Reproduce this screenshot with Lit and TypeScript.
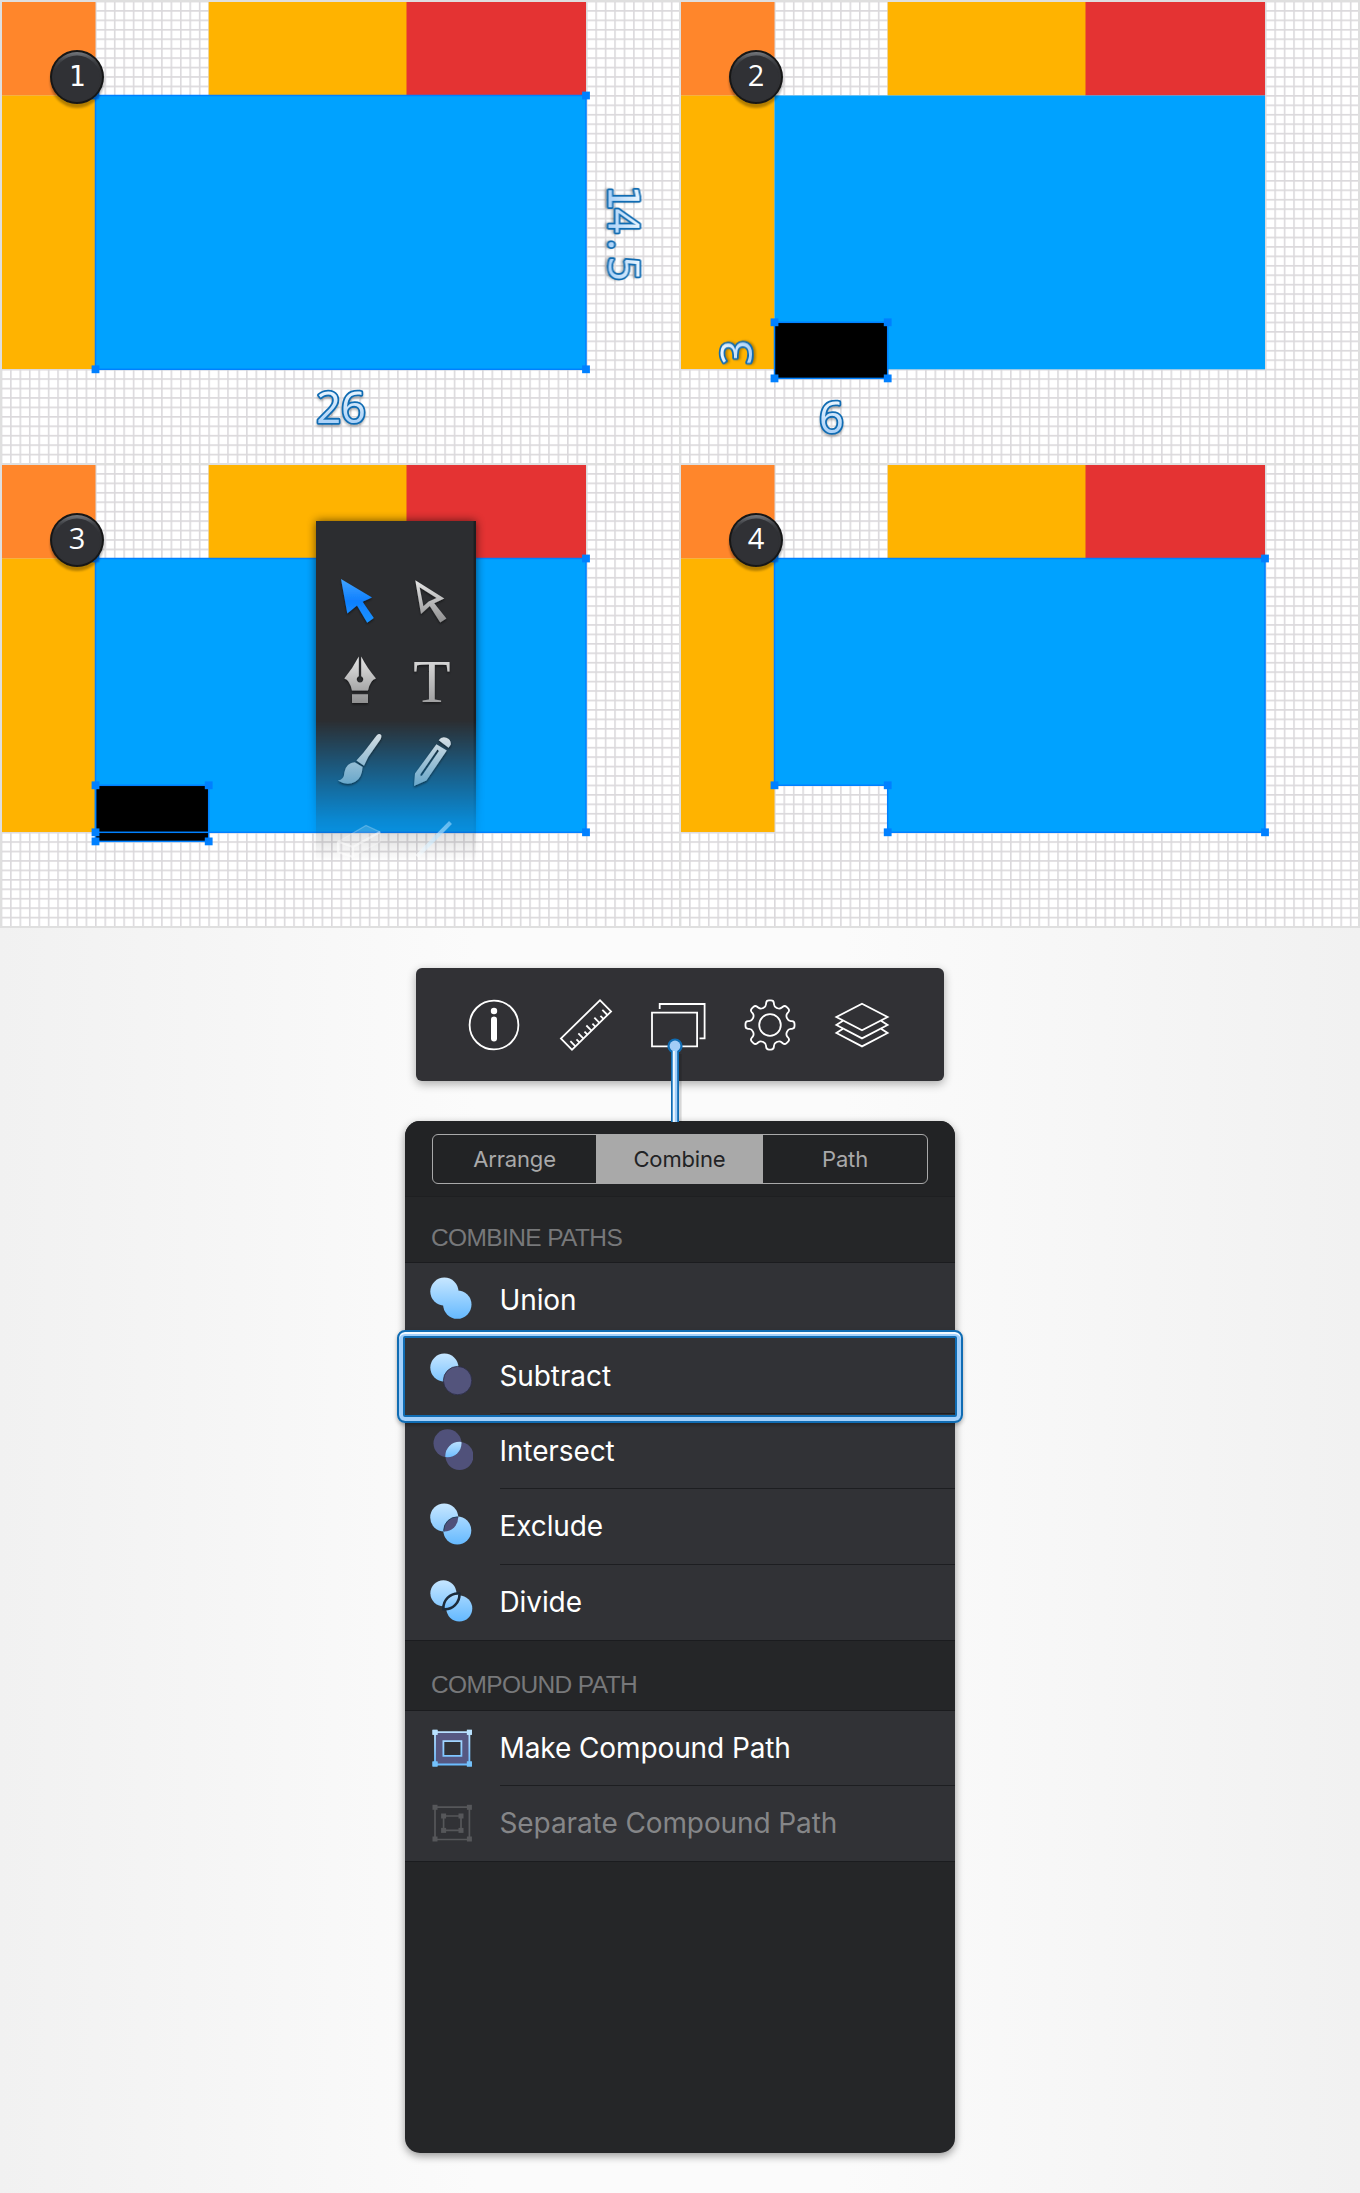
import { LitElement, html, svg, css } from 'lit';
import { customElement, property } from 'lit/decorators.js';

type Point = [number, number];

const X0 = 95.5;
const X1 = 208.7;
const X2 = 586;
const Y0 = 95.5;
const YN = 322.3;
const Y1 = 369.3;
const YB = 378.4;

const polar = (r: number, deg: number): Point => [
  r * Math.cos((deg * Math.PI) / 180),
  r * Math.sin((deg * Math.PI) / 180),
];

/** Closed path through the points with every corner rounded by d. */
function roundedPath(points: Point[], d: number): string {
  const n = points.length;
  const toward = (a: Point, b: Point): Point => {
    const len = Math.hypot(b[0] - a[0], b[1] - a[1]);
    const k = Math.min(d, len / 2) / len;
    return [a[0] + (b[0] - a[0]) * k, a[1] + (b[1] - a[1]) * k];
  };
  return (
    points
      .map((p, i) => {
        const a = toward(p, points[(i + n - 1) % n]);
        const b = toward(p, points[(i + 1) % n]);
        return `${i ? 'L' : 'M'}${a[0]},${a[1]}Q${p[0]},${p[1]} ${b[0]},${b[1]}`;
      })
      .join('') + 'Z'
  );
}

const gearPath = roundedPath(
  Array.from({ length: 8 }, (_, i) => i * 45).flatMap((a) => [
    polar(18.6, a - 13),
    polar(24.8, a - 8.5),
    polar(24.8, a + 8.5),
    polar(18.6, a + 13),
  ]),
  2.6,
);

@customElement('grid-panel')
export class GridPanel extends LitElement {
  @property({ type: Number }) step = 1;

  static styles = css`
    :host {
      display: block;
      overflow: hidden;
    }
    svg {
      display: block;
    }
    .num {
      font-family: 'Open Sans', sans-serif;
      font-size: 29px;
      fill: #fff;
      text-anchor: middle;
    }
    .num.slab {
      font-size: 27.5px;
    }
    .dim {
      font-family: 'Open Sans', sans-serif;
      font-size: 43.5px;
      font-weight: 500;
      fill: url(#ice);
      stroke: #106cb3;
      stroke-width: 3.6px;
      stroke-linejoin: round;
      paint-order: stroke;
      text-anchor: middle;
      filter: drop-shadow(0 2px 1px rgba(0, 0, 0, 0.28));
    }
    .slab {
      font-family: 'DejaVu Sans Mono', monospace;
      font-weight: 400;
    }
    .tee {
      font-family: 'Liberation Serif', serif;
      font-size: 61px;
      text-anchor: middle;
    }
  `;

  private handles(points: Point[]) {
    return points.map(
      ([x, y]) => svg`<rect x=${x - 3.9} y=${y - 3.9} width="7.8" height="7.8" fill="#0080ff"/>`,
    );
  }

  private shape() {
    const box = svg`<rect x=${X0} y=${Y0} width=${X2 - X0} height=${Y1 - Y0} fill="#00a2ff"/>`;
    const boxLine = svg`<rect x=${X0} y=${Y0} width=${X2 - X0} height=${Y1 - Y0}
      fill="none" stroke="#0080ff" stroke-width="1.5"/>`;
    const notch = svg`<rect x=${X0} y=${YN} width=${X1 - X0} height=${YB - YN}
      fill="#000" stroke="#0080ff" stroke-width="1.5"/>`;
    const notchPts: Point[] = [[X0, YN], [X1, YN], [X0, YB], [X1, YB]];
    const boxPts: Point[] = [[X0, Y0], [X2, Y0], [X0, Y1], [X2, Y1]];
    switch (this.step) {
      case 1:
        return svg`${box}${boxLine}${this.handles(boxPts)}`;
      case 2:
        return svg`${box}${notch}${this.handles(notchPts)}`;
      case 3:
        return svg`${box}${notch}${boxLine}${this.handles([...boxPts, ...notchPts])}`;
      default:
        return svg`<path d="M${X0},${Y0}H${X2}V${Y1}H${X1}V${YN}H${X0}Z" fill="#00a2ff"
          stroke="#0080ff" stroke-width="1.5"/>
          ${this.handles([[X0, Y0], [X2, Y0], [X2, Y1], [X1, Y1], [X1, YN], [X0, YN]])}`;
    }
  }

  private labels() {
    if (this.step === 1) {
      return svg`
        <text class="dim" x="341" y="422.5">26</text>
        <g transform="translate(608.5 233) rotate(90)">
          <text class="dim" y="0"><tspan class="slab" x="-35.5" font-size="42">1</tspan><tspan x="-12">4</tspan><tspan x="11.8">.</tspan><tspan x="35.6">5</tspan></text>
        </g>`;
    }
    if (this.step === 2) {
      return svg`
        <text class="dim" x="152.5" y="432.5">6</text>
        <g transform="translate(73 352.3) rotate(-90)"><text class="dim">3</text></g>`;
    }
    return null;
  }

  private palette() {
    return svg`
      <g transform="translate(0 -463)">
        <g mask="url(#fade)">
          <rect x="316" y="521" width="160" height="345" fill="#000" opacity=".6" filter="url(#soft)"/>
          <rect x="316" y="521" width="160" height="345" fill="#2c2d30"/>
          <rect x="473.6" y="521" width="2.4" height="345" fill="#1d1e21"/>
        </g>
        <g filter="url(#drop)">
          <path d="M341,579L372,597.5L362.6,601.8L373.8,618L367.2,622.8L357,605.6L347.3,613.5Z" fill="url(#arrow)"/>
          <path fill="url(#metal)" fill-rule="evenodd"
            d="M415.3,580.3L444.3,598.6L434.2,603.2L446.4,618.4L440.2,622.6L429.8,606L421,613.9Z
               M419.6,587.2L436.6,598L428.6,601.4L423.4,606.3Z"/>
          <path fill="url(#metal)" fill-rule="evenodd"
            d="M358.8,656.5L358.8,676.2A3.3,3.3 0 1 0 361.2,676.2L361.2,656.5Q367,668 376,678.4Q370,680 368,690.6H352Q350,680 344.3,678.4Q353,668 358.8,656.5Z
               M352,694.3H368V703H352Z"/>
          <text class="tee" x="432" y="702.4" fill="url(#metal)">T</text>
          <path fill="url(#frost)"
            d="M376.6,735.4Q379.5,732.6 381.4,735.4Q381.6,737.2 380.6,739.2L368.2,757L364,765.8L356.4,760.6L363.4,752.8Z
               M354.8,762.2L362.6,767Q362,777.5 355.6,781.6Q347,786.4 337.8,780.6Q344.4,779.6 344.3,772.6Q345.6,763 354.8,762.2Z"/>
          <path fill="url(#frost)" fill-rule="evenodd"
            d="M438.7,740.3A6.6,6.6 0 0 1 450.8,744.4L448.6,747.8Z
               M436.4,744.2L446.8,750.6L426.4,780.4L414,786L415,773.6Z
               M437.4,749.6L420.4,774.2L420.6,776.2L422.2,775.4L439,751Z"/>
        </g>
        <g opacity=".65" fill="none" stroke="#fff">
          <path d="M337.5,842L366,825.5L380,832V842L352,857L338,852Z" fill="#fff" fill-opacity=".25" stroke-opacity=".4" stroke-width="1.2"/>
          <path d="M338,841.5L353,847L380,832M353,847V856M338,841.5V852L353,857" stroke-width="2.2" stroke-opacity=".8"/>
          <path d="M450.5,822.5L417,856.5" stroke="url(#ghost)" stroke-width="4"/>
        </g>
      </g>`;
  }

  render() {
    return html`
      <svg width="681" height="465" viewBox="0 0 681 465">
        <defs>
          <pattern id="grid" x="0.62" y="0.62" width="9.44" height="9.44" patternUnits="userSpaceOnUse">
            <path d="M0,.8H9.44M.8,0V9.44" stroke="#dbd9dc" stroke-width="1.6" fill="none"/>
          </pattern>
          <linearGradient id="rim" x1="0" y1="0" x2="0" y2="1">
            <stop offset="0" stop-color="#74777c"/><stop offset=".18" stop-color="#3f4145"/>
            <stop offset=".35" stop-color="#303135"/><stop offset="1" stop-color="#2f3034"/>
          </linearGradient>
          <linearGradient id="ice" x1="0" y1="0" x2="0" y2="1">
            <stop offset=".15" stop-color="#f4fbff"/><stop offset=".85" stop-color="#a3cdf7"/>
          </linearGradient>
          <linearGradient id="metal" x1="0" y1="0" x2="0" y2="1">
            <stop offset="0" stop-color="#e6e6e6"/><stop offset="1" stop-color="#8f8f90"/>
          </linearGradient>
          <linearGradient id="arrow" x1="0" y1="0" x2="0" y2="1">
            <stop offset="0" stop-color="#42a4ff"/><stop offset=".5" stop-color="#0f80ff"/><stop offset="1" stop-color="#1a92ff"/>
          </linearGradient>
          <linearGradient id="frost" x1="0" y1="0" x2="0" y2="1">
            <stop offset="0" stop-color="#d3dde3"/><stop offset="1" stop-color="#68a7ca"/>
          </linearGradient>
          <linearGradient id="ghost" gradientUnits="userSpaceOnUse" x1="450" y1="822" x2="417" y2="856">
            <stop offset="0" stop-color="#8fd4ff"/><stop offset="1" stop-color="#fff"/>
          </linearGradient>
          <linearGradient id="fadeRamp" gradientUnits="userSpaceOnUse" x1="0" y1="720" x2="0" y2="862">
            <stop offset="0" stop-color="#fff"/><stop offset=".3" stop-color="#a8a8a8"/>
            <stop offset=".7" stop-color="#383838"/><stop offset="1" stop-color="#000"/>
          </linearGradient>
          <mask id="fade" maskUnits="userSpaceOnUse" x="290" y="490" width="210" height="400">
            <rect x="290" y="490" width="210" height="400" fill="url(#fadeRamp)"/>
          </mask>
          <filter id="soft" x="-20%" y="-10%" width="140%" height="120%"><feGaussianBlur stdDeviation="5"/></filter>
          <filter id="drop" x="-10%" y="-10%" width="120%" height="120%">
            <feDropShadow dx="0" dy="1.5" stdDeviation="1" flood-color="#000" flood-opacity=".5"/>
          </filter>
          <filter id="cast" x="-20%" y="-20%" width="140%" height="150%">
            <feDropShadow dx="0" dy="4" stdDeviation=".8" flood-color="#000" flood-opacity=".3"/>
          </filter>
        </defs>
        <rect width="681" height="465" fill="#ffffff"/>
        <rect width="681" height="465" fill="url(#grid)"/>
        <path d="M0,1H681M1,0V465" stroke="#dfdfdf" stroke-width="2"/>
        <path d="M2,2H95.5V95.5H2Z" fill="#ff862b"/>
        <path d="M2,95.5H95.5V369H2Z" fill="#ffb300"/>
        <path d="M208.7,2H407V95.5H208.7Z" fill="#ffb300"/>
        <path d="M406.5,2H586V95.5H406.5Z" fill="#e43333"/>
        ${this.shape()}
        ${this.labels()}
        ${this.step === 3 ? this.palette() : null}
        <circle cx="77" cy="77" r="27" fill="#141517" filter="url(#cast)"/>
        <circle cx="77" cy="77" r="25" fill="url(#rim)"/>
        <circle cx="77" cy="78.6" r="23" fill="#303135"/>
        <text class="num ${this.step === 1 ? 'slab' : ''}" x="77" y="86.4">${this.step}</text>
      </svg>
    `;
  }
}

@customElement('app-root')
export class AppRoot extends LitElement {
  static styles = css`
    :host {
      display: block;
      width: 1360px;
      height: 2193px;
      overflow: hidden;
      font-family: Inter, sans-serif;
      background: linear-gradient(90deg, #f1f1f1, #fbfbfb 35%, #fbfbfb 62%, #f1f1f1);
    }
    .page {
      display: flex;
      flex-direction: column;
      align-items: center;
    }
    .steps {
      box-sizing: border-box;
      display: grid;
      grid-template-columns: 679px 681px;
      grid-template-rows: 463px 464.5px;
      width: 1360px;
      height: 927.5px;
      position: relative;
    }
    .steps::after {
      content: '';
      position: absolute;
      inset: 0;
      border: solid #dfdfdf;
      border-width: 0 2px 2px 0;
    }
    .toolbar {
      box-sizing: border-box;
      position: relative;
      display: flex;
      justify-content: center;
      align-items: center;
      gap: 32px;
      width: 528px;
      height: 113px;
      margin-top: 40.5px;
      padding-right: 4px;
      border-radius: 6px;
      background: #313135;
      box-shadow: 0 3px 10px rgba(0, 0, 0, 0.32);
    }
    .toolbar svg {
      display: block;
      width: 60px;
      height: 60px;
      fill: none;
      stroke: #fff;
      stroke-width: 1.8;
    }
    .connector {
      position: absolute;
      left: 249px;
      top: 68px;
      width: 20px;
      height: 86px;
      z-index: 2;
    }
    .toolbar .connector svg {
      width: 20px;
      height: 86px;
      stroke: none;
    }
    .menu {
      display: flex;
      flex-direction: column;
      box-sizing: border-box;
      width: 550px;
      height: 1032px;
      margin-top: 40px;
      border-radius: 15px;
      background: #252628;
      box-shadow: 0 3px 9px rgba(0, 0, 0, 0.4);
    }
    .head {
      box-sizing: border-box;
      height: 76px;
      padding: 13px 27px 0;
      border-radius: 15px 15px 0 0;
      border-bottom: 1px solid #1e1f21;
      background: #222325;
    }
    .tabs {
      box-sizing: border-box;
      display: grid;
      grid-template-columns: 163px 167px 1fr;
      height: 50px;
      border: 1.5px solid #a9a9aa;
      border-radius: 6px;
      font-size: 22px;
      letter-spacing: -0.15px;
      line-height: 48px;
      text-align: center;
      color: #a9a9aa;
    }
    .tab.on {
      background: #a9a9a9;
      color: #222325;
    }
    .caption {
      box-sizing: border-box;
      padding: 25px 26px 0;
      height: 65px;
      font: 24.5px/32px 'Liberation Sans', Arial, sans-serif;
      letter-spacing: -0.62px;
      color: #77787a;
    }
    .caption.second {
      height: 69px;
      padding-top: 28px;
    }
    .list {
      border: solid #1b1c1f;
      border-width: 1px 0;
      background: #313236;
    }
    .item {
      position: relative;
      display: flex;
      height: 75.4px;
      padding-left: 25.5px;
      align-items: center;
      gap: 26px;
      color: #fff;
      font-size: 28px;
      letter-spacing: -0.1px;
    }
    .caption.second + .list .item {
      height: 74.8px;
    }
    .item svg {
      display: block;
      flex: none;
      width: 43px;
      height: 46px;
      margin-top: -1px;
      margin-left: -0.5px;
      margin-right: 0.5px;
    }
    .label {
      flex: 1;
      display: flex;
      align-items: center;
      box-sizing: border-box;
      height: 100%;
      border-bottom: 1px solid #1d1e21;
    }
    .item:last-child .label {
      border-bottom: 0;
      padding-bottom: 1px;
    }
    .item.off .label {
      color: #858688;
    }
    .item.picked::after {
      content: '';
      position: absolute;
      left: -8px;
      right: -8px;
      top: -8px;
      bottom: -9px;
      border: 2.5px solid #106cb3;
      border-radius: 8px;
      box-shadow:
        inset 0 2px 0 #f2f9ff,
        inset 0 0 0 4px #a3d0fb,
        inset 0 0 0 6px #106cb3,
        0 2px 4px rgba(0, 0, 0, 0.3);
      z-index: 1;
    }
  `;

  private icon(name: string) {
    const grad = svg`<defs><linearGradient id="sky" gradientUnits="userSpaceOnUse" x1="0" y1="1" x2="0" y2="43">
      <stop offset="0" stop-color="#c6e6ff"/><stop offset="1" stop-color="#62b8ff"/></linearGradient>
      <linearGradient id="sky1" x1="0" y1="0" x2="0" y2="1">
      <stop offset="0" stop-color="#c6e6ff"/><stop offset="1" stop-color="#7cc4ff"/></linearGradient>
      <linearGradient id="lens" gradientUnits="userSpaceOnUse" x1="0" y1="14" x2="0" y2="30">
      <stop offset="0" stop-color="#b9e0ff"/><stop offset="1" stop-color="#6cbcff"/></linearGradient>
      <clipPath id="first"><circle cx="17.5" cy="15.3" r="14"/></clipPath>
      <clipPath id="disc"><circle cx="14.2" cy="14.5" r="14"/></clipPath></defs>`;
    const corners = (a: number, b: number, c: number, d: number, s: number) =>
      [[a, b], [c, b], [a, d], [c, d]].map(
        ([x, y]) => svg`<rect x=${x - s / 2} y=${y - s / 2} width=${s} height=${s}/>`,
      );
    const art: Record<string, unknown> = {
      Union: svg`<g fill="url(#sky)"><circle cx="14.4" cy="14.6" r="14.1"/><circle cx="27.3" cy="27.6" r="14.2"/></g>`,
      Subtract: svg`<circle cx="14.4" cy="14.6" r="14.1" fill="url(#sky1)"/>
        <circle cx="27.6" cy="27.6" r="14.2" fill="#53547c" stroke="#2a2b44" stroke-width=".8"/>`,
      Intersect: svg`<g fill="#50517a"><circle cx="17.5" cy="15.3" r="14"/><circle cx="29.5" cy="28" r="14"/></g>
        <circle cx="29.5" cy="28" r="14.2" fill="url(#lens)" clip-path="url(#first)"/>`,
      Exclude: svg`<g fill="url(#sky)"><circle cx="14.2" cy="14.5" r="14"/><circle cx="27.3" cy="27.5" r="14"/></g>
        <circle cx="27.3" cy="27.5" r="13.6" fill="#4f507a" stroke="#23405c" stroke-width="1" clip-path="url(#disc)"/>`,
      Divide: svg`<g fill="url(#sky)"><circle cx="13.4" cy="14.3" r="13"/><circle cx="29.3" cy="29.5" r="13"/></g>
        <path d="M13.4,30.2A14.6,14.6 0 0 1 29.4,14.6A14.6,14.6 0 0 1 13.4,30.2Z" fill="url(#lens)"
          stroke="#1d2b3a" stroke-width="2.6"/>`,
      'Make Compound Path': svg`<path fill-rule="evenodd" fill="#565882" stroke="url(#sky)" stroke-width="1.8"
          d="M5,7.2H39.4V39.5H5ZM13.4,16.2H31.4V30.8H13.4Z"/>
        <g fill="#b9e1ff">${corners(5, 7.3, 39.4, 7.3, 5)}</g><g fill="#74c1fb">${corners(5, 39, 39.4, 39, 5)}</g>`,
      'Separate Compound Path': svg`<g fill="none" stroke="#56575a" stroke-width="1.7"><path d="M5,7.2H39.4V39.5H5ZM13.6,16H31V30.4H13.6Z"/></g>
        <g fill="#56575a">${corners(5, 7.3, 39.4, 39, 5)}${corners(13.6, 16, 31, 30.4, 5)}</g>`,
    };
    return html`<svg viewBox="0 0 43 46">${grad}${art[name]}</svg>`;
  }

  private item(name: string, state = '') {
    return html`<div class="item ${state}">${this.icon(name)}<div class="label">${name}</div></div>`;
  }

  render() {
    const ticks = Array.from({ length: 9 }, (_, i) => -22.5 + i * 5.6);
    return html`
      <div class="page">
        <div class="steps">
          ${[1, 2, 3, 4].map((n) => html`<grid-panel .step=${n}></grid-panel>`)}
        </div>
        <div class="toolbar">
          <svg viewBox="-30 -30 60 60">
            <circle r="24.4"/>
            <circle cy="-14" r="3.2" fill="#fff" stroke="none"/>
            <path d="M0,-5.5V13.5" stroke-width="6" stroke-linecap="round"/>
          </svg>
          <svg viewBox="-30 -30 60 60">
            <g transform="rotate(-44.5)">
              <rect x="-27.4" y="-7.9" width="54.8" height="15.8"/>
              ${ticks.map((x, i) => svg`<path d="M${x},7.9V${i % 2 ? 3.6 : 0.6}"/>`)}
            </g>
          </svg>
          <svg viewBox="-30 -30 60 60">
            <path d="M-26,-12.4H19.1V21.4H-26ZM-18.3,-16V-21H26.6V13.3H21.5"/>
          </svg>
          <svg viewBox="-30 -30 60 60">
            <path d=${gearPath}/>
            <circle r="10.8"/>
          </svg>
          <svg viewBox="-30 -30 60 60">
            <path d="M0,-21.3L25.6,-8L0,5.3L-25.6,-8ZM-19.4,-4L-25.6,0L0,13.4L25.6,0L19.4,-4M-19.4,4L-25.6,8L0,21.4L25.6,8L19.4,4"/>
          </svg>
          <div class="connector">
            <svg viewBox="0 0 20 86">
              <path d="M13.4,18H16.6V86H13.4Z" fill="#000" opacity=".14"/>
              <circle cx="10" cy="10" r="7.6" fill="#106cb3"/>
              <path d="M6,12H14V86H6Z" fill="#106cb3"/>
              <circle cx="10" cy="10" r="5.4" fill="#a3cdf7"/>
              <path d="M7.8,13H12.2V86H7.8Z" fill="#a3d0fb"/>
              <path d="M7.8,15H9.8V86H7.8Z" fill="#eef8ff"/>
            </svg>
          </div>
        </div>
        <div class="menu">
          <div class="head">
            <div class="tabs">
              <div class="tab">Arrange</div>
              <div class="tab on">Combine</div>
              <div class="tab">Path</div>
            </div>
          </div>
          <div class="caption">COMBINE PATHS</div>
          <div class="list">
            ${this.item('Union')} ${this.item('Subtract', 'picked')} ${this.item('Intersect')}
            ${this.item('Exclude')} ${this.item('Divide')}
          </div>
          <div class="caption second">COMPOUND PATH</div>
          <div class="list">
            ${this.item('Make Compound Path')} ${this.item('Separate Compound Path', 'off')}
          </div>
        </div>
      </div>
    `;
  }
}
